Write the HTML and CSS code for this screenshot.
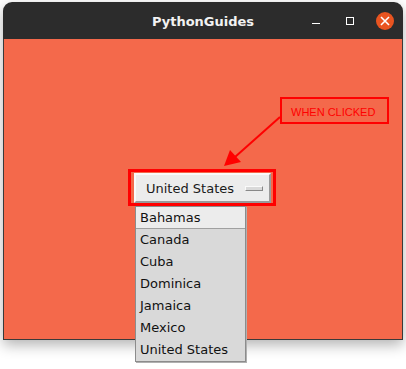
FILE: index.html
```html
<!DOCTYPE html>
<html lang="en">
<head>
  <meta charset="UTF-8">
  <title>PythonGuides</title>
  <link rel="stylesheet" href="styles.css">
</head>
<body>

  <div class="window">
    <div class="titlebar">
      <div class="title">PythonGuides</div>
      <div class="controls">
        <span class="min-btn"></span>
        <span class="max-btn"></span>
        <span class="close-btn">
          <svg width="10" height="10" viewBox="0 0 10 10">
            <path d="M1 1 L9 9 M9 1 L1 9" stroke="#fff" stroke-width="1.6"/>
          </svg>
        </span>
      </div>
    </div>

    <div class="content">
      <div class="highlight">
        <button class="option-button">
          <span class="option-text">United States</span>
          <span class="indicator"></span>
        </button>
      </div>

      <div class="note">WHEN CLICKED</div>

      <svg class="arrow" width="400" height="301" viewBox="0 0 400 301">
        <line x1="276" y1="78" x2="231" y2="118" stroke="#ff0000" stroke-width="2"/>
        <polygon points="220,127 226,111 237,123" fill="#ff0000"/>
      </svg>

      <ul class="menu">
        <li class="active">Bahamas</li>
        <li>Canada</li>
        <li>Cuba</li>
        <li>Dominica</li>
        <li>Jamaica</li>
        <li>Mexico</li>
        <li>United States</li>
      </ul>
    </div>
  </div>

</body>
</html>
```

FILE: styles.css
```css
html, body {
  height: 100%;
}

body {
  margin: 0;
  padding: 0;
  min-height: 369px;
  background: #ffffff;
  font-family: 'DejaVu Sans', sans-serif;
}

.window {
  position: relative;
  margin: 2px 3px 0 3px;
  width: 400px;
  border-radius: 9px 9px 0 0;
  box-shadow: 0 5px 14px rgba(0, 0, 0, 0.3);
}

.titlebar {
  position: relative;
  height: 37px;
  background: #2c2c2c;
  border-radius: 9px 9px 0 0;
  display: flex;
  align-items: center;
  justify-content: center;
}

.title {
  color: #f2f2f2;
  font-weight: bold;
  font-size: 13px;
  margin-top: 1px;
}

.controls {
  position: absolute;
  right: 0;
  top: 0;
  height: 37px;
  display: flex;
  align-items: center;
}

.min-btn {
  width: 8px;
  height: 1px;
  margin-top: 6px;
  background: #ffffff;
  margin-right: 26px;
}

.max-btn {
  width: 6px;
  height: 6px;
  border: 1px solid #ffffff;
  margin-right: 22px;
}

.close-btn {
  width: 18px;
  height: 18px;
  border-radius: 50%;
  background: #e95420;
  display: flex;
  align-items: center;
  justify-content: center;
  margin-right: 9px;
}

.content {
  position: relative;
  height: 301px;
  background: #f4694b;
  border: 1px solid #3a3a3a;
  border-top: none;
  box-sizing: border-box;
  padding: 130px 0 0 124px;
}

.highlight {
  width: 148px;
  height: 37px;
  border: 3px solid #ff0000;
  padding: 1px 0 0 3px;
  box-sizing: border-box;
}

.option-button {
  width: 137px;
  height: 30px;
  margin: 0;
  padding: 0 0 0 10px;
  display: flex;
  align-items: center;
  background: #ececec;
  border: 2px solid;
  border-color: #fafafa #9a9a9a #9a9a9a #fafafa;
  font-family: 'DejaVu Sans', sans-serif;
  font-size: 13px;
  color: #1a1a1a;
  box-sizing: border-box;
}

.option-text {
  flex: 1;
  text-align: left;
}

.indicator {
  width: 16px;
  height: 3px;
  background: #d9d9d9;
  border: 1px solid;
  border-color: #fafafa #888888 #888888 #fafafa;
  margin-right: 6px;
}

.note {
  position: absolute;
  left: 276px;
  top: 58px;
  width: 109px;
  height: 27px;
  border: 2px solid #ff0000;
  box-sizing: border-box;
  color: #ff0000;
  font-family: 'Liberation Sans', sans-serif;
  font-size: 11px;
  padding: 7px 0 0 9px;
}

.arrow {
  position: absolute;
  left: 0;
  top: 0;
}

.menu {
  position: absolute;
  z-index: 5;
  left: 131px;
  top: 167px;
  width: 111px;
  margin: 0;
  padding: 0;
  list-style: none;
  background: #d9d9d9;
  border: 1px solid #8c8c8c;
  box-sizing: border-box;
  font-size: 13px;
  color: #111111;
  box-shadow: 1px 1px 0 #b0b0b0;
}

.menu li {
  height: 22px;
  line-height: 22px;
  padding-left: 4px;
}

.menu li.active {
  background: #ececec;
  border-bottom: 1px solid #a0a0a0;
  height: 21px;
  line-height: 21px;
}
```
